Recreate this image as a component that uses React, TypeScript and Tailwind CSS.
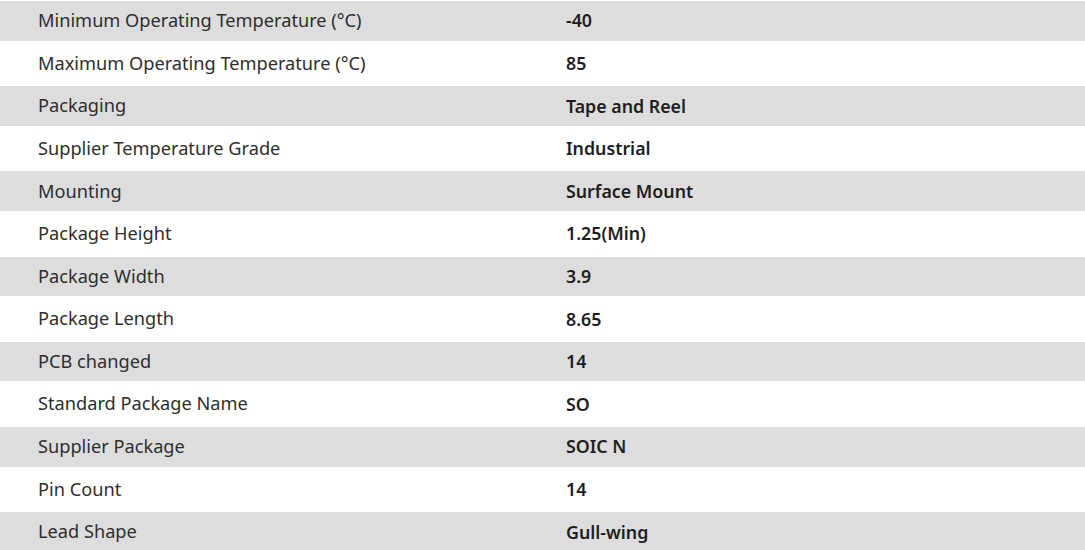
import React from "react";

const rows: [string, string][] = [
  ["Minimum Operating Temperature (°C)", "-40"],
  ["Maximum Operating Temperature (°C)", "85"],
  ["Packaging", "Tape and Reel"],
  ["Supplier Temperature Grade", "Industrial"],
  ["Mounting", "Surface Mount"],
  ["Package Height", "1.25(Min)"],
  ["Package Width", "3.9"],
  ["Package Length", "8.65"],
  ["PCB changed", "14"],
  ["Standard Package Name", "SO"],
  ["Supplier Package", "SOIC N"],
  ["Pin Count", "14"],
  ["Lead Shape", "Gull-wing"],
];

export default function App() {
  return (
    <div
      className="w-[1085px] h-[550px] overflow-hidden bg-white pt-[1px] flex flex-col gap-[3px]"
      style={{ fontFamily: '"Noto Sans", "Open Sans", sans-serif' }}
    >
      {rows.map(([k, v], i) => (
        <div
          key={i}
          className={`grid grid-cols-[528px_1fr] items-center h-[39.6px] shrink-0 ${
            i % 2 === 0 ? "bg-[#dddddd]" : "bg-white"
          }`}
        >
          <div className="pl-[38px] text-[18.2px] text-[#2e2e2e]">{k}</div>
          <div className="pl-[38px] text-[17.8px] font-semibold text-[#1e1e1e]">{v}</div>
        </div>
      ))}
    </div>
  );
}
